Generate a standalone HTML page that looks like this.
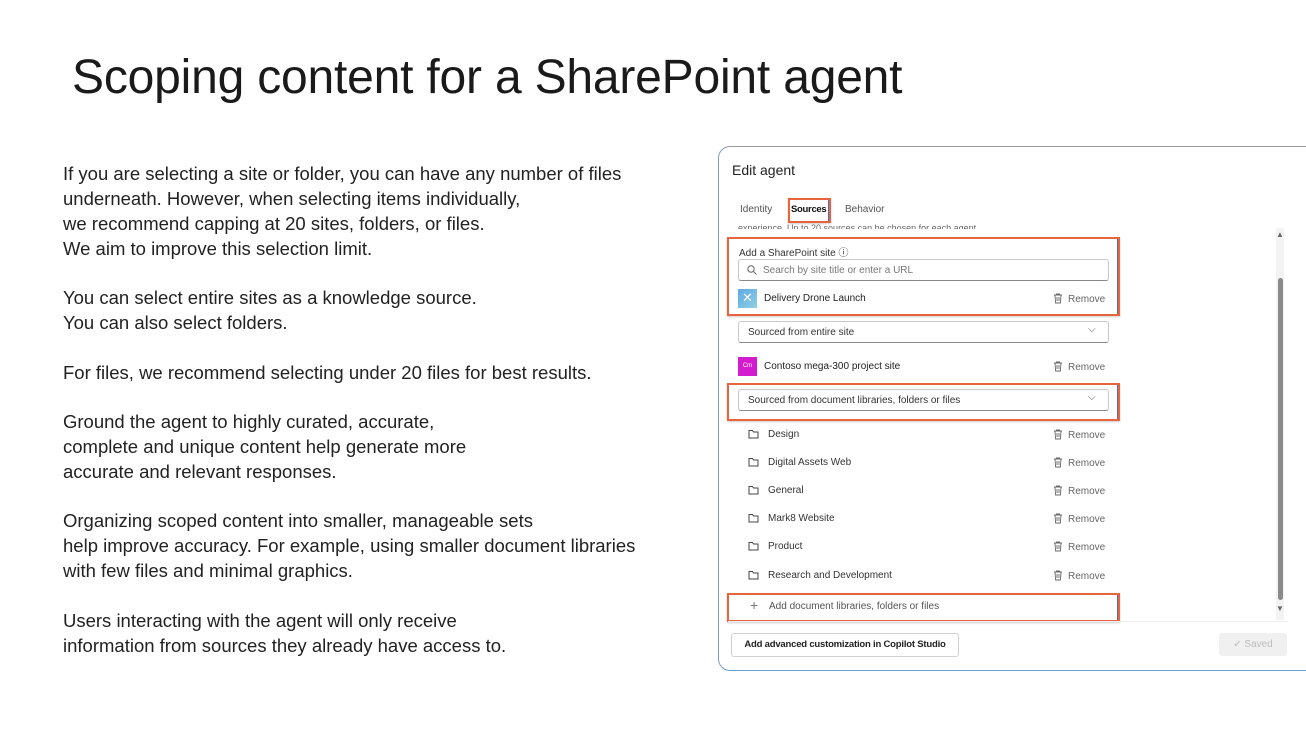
<!DOCTYPE html>
<html><head><meta charset="utf-8"><style>
*{margin:0;padding:0;box-sizing:border-box}
body{width:1306px;height:734px;background:#fff;position:relative;overflow:hidden;font-family:"Liberation Sans",sans-serif;color:#1a1a1a}
.a{position:absolute;white-space:nowrap}
.title{left:72px;top:50px;font-size:48px;font-weight:300;color:#1a1a1a;letter-spacing:-0.2px}
.body{left:63px;font-size:18.5px;line-height:25px;color:#222}
.panel{position:absolute;left:718px;top:146px;width:620px;height:525px;border:1px solid #9a9a9a;border-left-color:#7a9cc4;border-bottom-color:#6f9bd0;border-radius:12px;background:#fff}
.s{font-size:10px;color:#333}
.red{position:absolute;border:2px solid #e8643c;box-shadow:-1px 0 0 #4a6fc0 inset, 0 1px 2px rgba(0,0,0,.2)}
.inp{position:absolute;border:1px solid #c8c8c8;border-bottom-color:#888;border-radius:3px;background:#fff}
.rm{position:absolute;left:1053px;font-size:10px;color:#666}
.rm svg{vertical-align:-2px;margin-right:5px}
.fold{position:absolute;left:748px;font-size:10px;color:#333}
.fold svg{vertical-align:-2px;margin-right:9px}
</style></head><body>
<div class="a title">Scoping content for a SharePoint agent</div>
<div class="a body" style="top:161px">If you are selecting a site or folder, you can have any number of files<br>underneath. However, when selecting items individually,<br>we recommend capping at 20 sites, folders, or files.<br>We aim to improve this selection limit.</div>
<div class="a body" style="top:285px">You can select entire sites as a knowledge source.<br>You can also select folders.</div>
<div class="a body" style="top:360px">For files, we recommend selecting under 20 files for best results.</div>
<div class="a body" style="top:409px">Ground the agent to highly curated, accurate,<br>complete and unique content help generate more<br>accurate and relevant responses.</div>
<div class="a body" style="top:508px">Organizing scoped content into smaller, manageable sets<br>help improve accuracy. For example, using smaller document libraries<br>with few files and minimal graphics.</div>
<div class="a body" style="top:608px">Users interacting with the agent will only receive<br>information from sources they already have access to.</div>

<div class="panel"></div>
<div class="a" style="left:732px;top:162px;font-size:14px;color:#222">Edit agent</div>
<div class="a s" style="left:740px;top:204px;color:#555">Identity</div>
<div class="a s" style="left:791px;top:204px;color:#111;font-weight:bold;font-size:9.5px;letter-spacing:-0.3px">Sources</div>
<div class="a s" style="left:845px;top:204px;color:#555">Behavior</div>
<div class="red" style="left:788px;top:198px;width:43px;height:25px"></div>
<div class="a" style="left:738px;top:221px;font-size:9px;color:#666;height:8px;overflow:hidden;line-height:14px">experience. Up to 20 sources can be chosen for each agent.</div>

<div class="a s" style="left:739px;top:244px">Add a SharePoint site ⓘ</div>
<div class="inp" style="left:738px;top:259px;width:371px;height:22px"></div>
<svg class="a" style="left:747px;top:265px" width="10" height="10" viewBox="0 0 10 10"><circle cx="4" cy="4" r="3.2" fill="none" stroke="#666"/><path d="M6.5 6.5L9.5 9.5" stroke="#666"/></svg>
<div class="a" style="left:763px;top:265px;font-size:10px;color:#777">Search by site title or enter a URL</div>
<div class="a" style="left:738px;top:289px;width:19px;height:19px;background:linear-gradient(135deg,#5fa8e8,#8fd0e0)"><span style="position:absolute;left:4px;top:1px;color:#fff;font-size:13px">✕</span></div>
<div class="a" style="left:764px;top:293px;font-size:10px;color:#222">Delivery Drone Launch</div>
<div class="inp" style="left:738px;top:321px;width:371px;height:22px"></div>
<div class="a" style="left:748px;top:327px;font-size:10px;color:#333">Sourced from entire site</div>
<div class="a" style="left:1088px;top:324px;font-size:10px;color:#555">⌵</div>
<div class="a" style="left:738px;top:357px;width:19px;height:19px;background:#d41ccf;color:#fff;font-size:6px;text-align:center;line-height:19px">Cm</div>
<div class="a" style="left:764px;top:361px;font-size:10px;color:#222">Contoso mega-300 project site</div>
<div class="inp" style="left:738px;top:389px;width:371px;height:22px"></div>
<div class="a" style="left:748px;top:395px;font-size:10px;color:#333">Sourced from document libraries, folders or files</div>
<div class="a" style="left:1088px;top:392px;font-size:10px;color:#555">⌵</div>

<div class="fold" style="top:429px"><svg width="11" height="10" viewBox="0 0 11 10"><path d="M1 1.5h3.5l1 1.5H10v6H1z" fill="none" stroke="#444"/></svg>Design</div>
<div class="fold" style="top:457px"><svg width="11" height="10" viewBox="0 0 11 10"><path d="M1 1.5h3.5l1 1.5H10v6H1z" fill="none" stroke="#444"/></svg>Digital Assets Web</div>
<div class="fold" style="top:485px"><svg width="11" height="10" viewBox="0 0 11 10"><path d="M1 1.5h3.5l1 1.5H10v6H1z" fill="none" stroke="#444"/></svg>General</div>
<div class="fold" style="top:513px"><svg width="11" height="10" viewBox="0 0 11 10"><path d="M1 1.5h3.5l1 1.5H10v6H1z" fill="none" stroke="#444"/></svg>Mark8 Website</div>
<div class="fold" style="top:541px"><svg width="11" height="10" viewBox="0 0 11 10"><path d="M1 1.5h3.5l1 1.5H10v6H1z" fill="none" stroke="#444"/></svg>Product</div>
<div class="fold" style="top:570px"><svg width="11" height="10" viewBox="0 0 11 10"><path d="M1 1.5h3.5l1 1.5H10v6H1z" fill="none" stroke="#444"/></svg>Research and Development</div>

<div class="rm" style="top:293px"><svg width="10" height="11" viewBox="0 0 10 11"><path d="M1 2h8M3.5 2V1h3v1M2 2l.6 8h4.8L8 2M4 4v4M6 4v4" fill="none" stroke="#666" stroke-width=".9"/></svg>Remove</div>
<div class="rm" style="top:361px"><svg width="10" height="11" viewBox="0 0 10 11"><path d="M1 2h8M3.5 2V1h3v1M2 2l.6 8h4.8L8 2M4 4v4M6 4v4" fill="none" stroke="#666" stroke-width=".9"/></svg>Remove</div>
<div class="rm" style="top:429px"><svg width="10" height="11" viewBox="0 0 10 11"><path d="M1 2h8M3.5 2V1h3v1M2 2l.6 8h4.8L8 2M4 4v4M6 4v4" fill="none" stroke="#666" stroke-width=".9"/></svg>Remove</div>
<div class="rm" style="top:457px"><svg width="10" height="11" viewBox="0 0 10 11"><path d="M1 2h8M3.5 2V1h3v1M2 2l.6 8h4.8L8 2M4 4v4M6 4v4" fill="none" stroke="#666" stroke-width=".9"/></svg>Remove</div>
<div class="rm" style="top:485px"><svg width="10" height="11" viewBox="0 0 10 11"><path d="M1 2h8M3.5 2V1h3v1M2 2l.6 8h4.8L8 2M4 4v4M6 4v4" fill="none" stroke="#666" stroke-width=".9"/></svg>Remove</div>
<div class="rm" style="top:513px"><svg width="10" height="11" viewBox="0 0 10 11"><path d="M1 2h8M3.5 2V1h3v1M2 2l.6 8h4.8L8 2M4 4v4M6 4v4" fill="none" stroke="#666" stroke-width=".9"/></svg>Remove</div>
<div class="rm" style="top:541px"><svg width="10" height="11" viewBox="0 0 10 11"><path d="M1 2h8M3.5 2V1h3v1M2 2l.6 8h4.8L8 2M4 4v4M6 4v4" fill="none" stroke="#666" stroke-width=".9"/></svg>Remove</div>
<div class="rm" style="top:570px"><svg width="10" height="11" viewBox="0 0 10 11"><path d="M1 2h8M3.5 2V1h3v1M2 2l.6 8h4.8L8 2M4 4v4M6 4v4" fill="none" stroke="#666" stroke-width=".9"/></svg>Remove</div>

<div class="a" style="left:750px;top:598px;font-size:14px;color:#777;line-height:14px">+</div>
<div class="a" style="left:769px;top:601px;font-size:10px;color:#555">Add document libraries, folders or files</div>

<div class="red" style="left:727px;top:237px;width:393px;height:79px"></div>
<div class="red" style="left:727px;top:383px;width:393px;height:38px"></div>
<div class="red" style="left:727px;top:593px;width:393px;height:29px"></div>

<div class="a" style="left:1276px;top:228px;width:8px;height:392px;background:#f3f3f3"></div>
<div class="a" style="left:1278px;top:278px;width:5px;height:322px;background:#8a8a8a;border-radius:3px"></div>
<div class="a" style="left:1276px;top:230px;font-size:8px;color:#666">▲</div>
<div class="a" style="left:1276px;top:604px;font-size:8px;color:#666">▼</div>
<div class="a" style="left:728px;top:621px;width:560px;height:1px;background:#eee"></div>

<div class="a" style="left:731px;top:633px;width:228px;height:24px;border:1px solid #d0d0d0;border-radius:3px;font-size:9.5px;font-weight:bold;color:#222;text-align:center;line-height:22px;letter-spacing:-0.2px">Add advanced customization in Copilot Studio</div>
<div class="a" style="left:1219px;top:633px;width:68px;height:23px;background:#f0f0f0;border-radius:3px;font-size:10px;color:#bbb;text-align:center;line-height:23px">✓ Saved</div>
</body></html>
